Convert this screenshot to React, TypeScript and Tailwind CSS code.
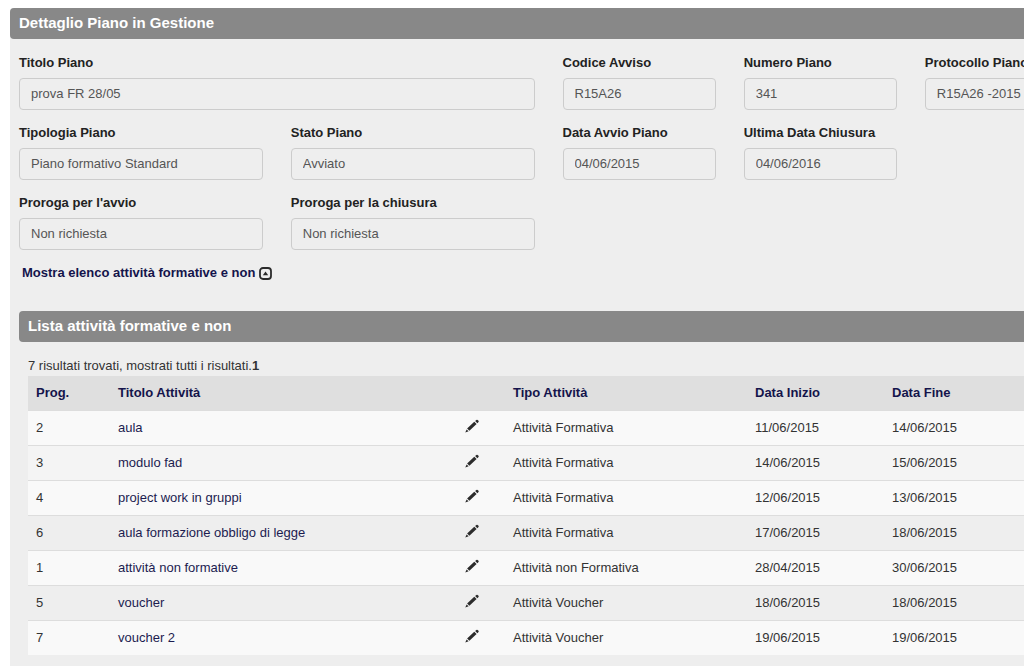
import { useState } from 'react';

const fields = [
    { id: 'titolo', label: 'Titolo Piano', value: 'prova FR 28/05', span: 'col-span-6' },
    { id: 'codice', label: 'Codice Avviso', value: 'R15A26', span: 'col-span-2' },
    { id: 'numero', label: 'Numero Piano', value: '341', span: 'col-span-2' },
    { id: 'protocollo', label: 'Protocollo Piano', value: 'R15A26 -2015', span: 'col-span-2' },
    { id: 'tipologia', label: 'Tipologia Piano', value: 'Piano formativo Standard', span: 'col-span-3' },
    { id: 'stato', label: 'Stato Piano', value: 'Avviato', span: 'col-span-3' },
    { id: 'avvio', label: 'Data Avvio Piano', value: '04/06/2015', span: 'col-span-2' },
    { id: 'chiusura', label: 'Ultima Data Chiusura', value: '04/06/2016', span: 'col-span-4', half: true },
    { id: 'proroga-avvio', label: "Proroga per l'avvio", value: 'Non richiesta', span: 'col-span-3' },
    { id: 'proroga-chiusura', label: 'Proroga per la chiusura', value: 'Non richiesta', span: 'col-span-3' },
];

const activities = [
    { prog: 2, title: 'aula', type: 'Attività Formativa', start: '11/06/2015', end: '14/06/2015', bg: 'bg-[#f9f9f9]' },
    { prog: 3, title: 'modulo fad', type: 'Attività Formativa', start: '14/06/2015', end: '15/06/2015', bg: 'bg-[#f4f4f4]' },
    { prog: 4, title: 'project work in gruppi', type: 'Attività Formativa', start: '12/06/2015', end: '13/06/2015', bg: 'bg-[#f9f9f9]' },
    { prog: 6, title: 'aula formazione obbligo di legge', type: 'Attività Formativa', start: '17/06/2015', end: '18/06/2015', bg: 'bg-[#eeeeee]' },
    { prog: 1, title: 'attività non formative', type: 'Attività non Formativa', start: '28/04/2015', end: '30/06/2015', bg: 'bg-[#f9f9f9]' },
    { prog: 5, title: 'voucher', type: 'Attività Voucher', start: '18/06/2015', end: '18/06/2015', bg: 'bg-[#eeeeee]' },
    { prog: 7, title: 'voucher 2', type: 'Attività Voucher', start: '19/06/2015', end: '19/06/2015', bg: 'bg-[#f9f9f9]' },
];

function PencilIcon() {
    return (
        <svg className="w-3.5 h-3.5" viewBox="0 0 14 14" fill="#2b2b2b" aria-hidden="true">
            <path d="M0.3 13.6 1.6 10.4 3.6 12.3z" />
            <path d="M2.1 9.6 9.3 2.8 11.6 5 4.4 11.8z" />
            <path d="M10.1 2.1 11.4 0.9Q12 0.4 12.6 0.9L13.5 1.8Q14 2.4 13.5 3L12.4 4.2z" />
        </svg>
    );
}

function ToggleIcon({ open }: { open: boolean }) {
    return (
        <svg className="w-[13px] h-[13px]" viewBox="0 0 13 13" aria-hidden="true">
            <rect x="1" y="1" width="11" height="11" rx="3" fill="none" stroke="#2b2b2b" strokeWidth="1.8" />
            <path d={open ? 'M3.8 8.3h5.4L6.5 4.6z' : 'M3.8 4.7h5.4L6.5 8.4z'} fill="#2b2b2b" />
        </svg>
    );
}

export default function App() {
    const [isOpen, setIsOpen] = useState(true);

    return (
        <div className="min-h-screen overflow-hidden bg-white pt-2 pl-2.5 font-['Liberation_Sans',Arial,sans-serif] text-[13px] leading-5 text-[#333333]">
            <section className="min-w-[1077px] min-h-screen bg-[#eeeeee] rounded-t">
                <h1 className="h-[31px] px-[9px] rounded bg-[#888888] text-[15px] leading-[30px] font-bold text-white">
                    Dettaglio Piano in Gestione
                </h1>

                <div className="px-[9px] pt-3.5">
                    {/* Plan details */}
                    <form className="grid grid-cols-12 gap-x-7 gap-y-[13px]">
                        {fields.map((field) => (
                            <div key={field.id} className={field.span}>
                                <label htmlFor={field.id} className="block h-[25px] font-bold whitespace-nowrap text-[#222222]">
                                    {field.label}
                                </label>
                                <input
                                    id={field.id}
                                    readOnly
                                    defaultValue={field.value}
                                    className={`block h-8 px-[11px] pb-0.5 rounded border border-[#cccccc] text-[#555555] ${field.half ? 'w-[calc(50%-14px)]' : 'w-full'}`}
                                />
                            </div>
                        ))}
                    </form>

                    <button
                        type="button"
                        aria-expanded={isOpen}
                        onClick={() => setIsOpen(!isOpen)}
                        className="flex items-center gap-1 mt-[13px] ml-[3px] font-bold text-[#14144b]"
                    >
                        Mostra elenco attività formative e non
                        <ToggleIcon open={isOpen} />
                    </button>

                    {/* Activity list */}
                    {isOpen && (
                        <div className="mt-7">
                            <h2 className="h-[31px] px-[9px] rounded bg-[#888888] text-[15px] leading-[30px] font-bold text-white">
                                Lista attività formative e non
                            </h2>
                            <div className="px-[9px] pt-3.5">
                                <p>
                                    7 risultati trovati, mostrati tutti i risultati.<strong>1</strong>
                                </p>
                                <table className="w-full table-fixed text-left">
                                    <colgroup>
                                        <col className="w-[82px]" />
                                        <col className="w-[347px]" />
                                        <col className="w-12" />
                                        <col className="w-[242px]" />
                                        <col className="w-[137px]" />
                                        <col />
                                    </colgroup>
                                    <thead>
                                        <tr className="h-[34px] bg-[#dfdfdf] text-[#14144b]">
                                            <th className="px-2">Prog.</th>
                                            <th className="px-2">Titolo Attività</th>
                                            <th></th>
                                            <th className="px-2">Tipo Attività</th>
                                            <th className="px-2">Data Inizio</th>
                                            <th className="px-2">Data Fine</th>
                                        </tr>
                                    </thead>
                                    <tbody>
                                        {activities.map((row) => (
                                            <tr key={row.prog} className={`h-[35px] border-t border-[#dddddd] ${row.bg}`}>
                                                <td className="px-2">{row.prog}</td>
                                                <td className="px-2">
                                                    <a href="#" className="text-[#1c1c50]">{row.title}</a>
                                                </td>
                                                <td className="px-2 pb-1">
                                                    <button type="button" aria-label={`Modifica ${row.title}`} className="block">
                                                        <PencilIcon />
                                                    </button>
                                                </td>
                                                <td className="px-2">{row.type}</td>
                                                <td className="px-2">{row.start}</td>
                                                <td className="px-2">{row.end}</td>
                                            </tr>
                                        ))}
                                    </tbody>
                                </table>
                            </div>
                        </div>
                    )}
                </div>
            </section>
        </div>
    );
}
